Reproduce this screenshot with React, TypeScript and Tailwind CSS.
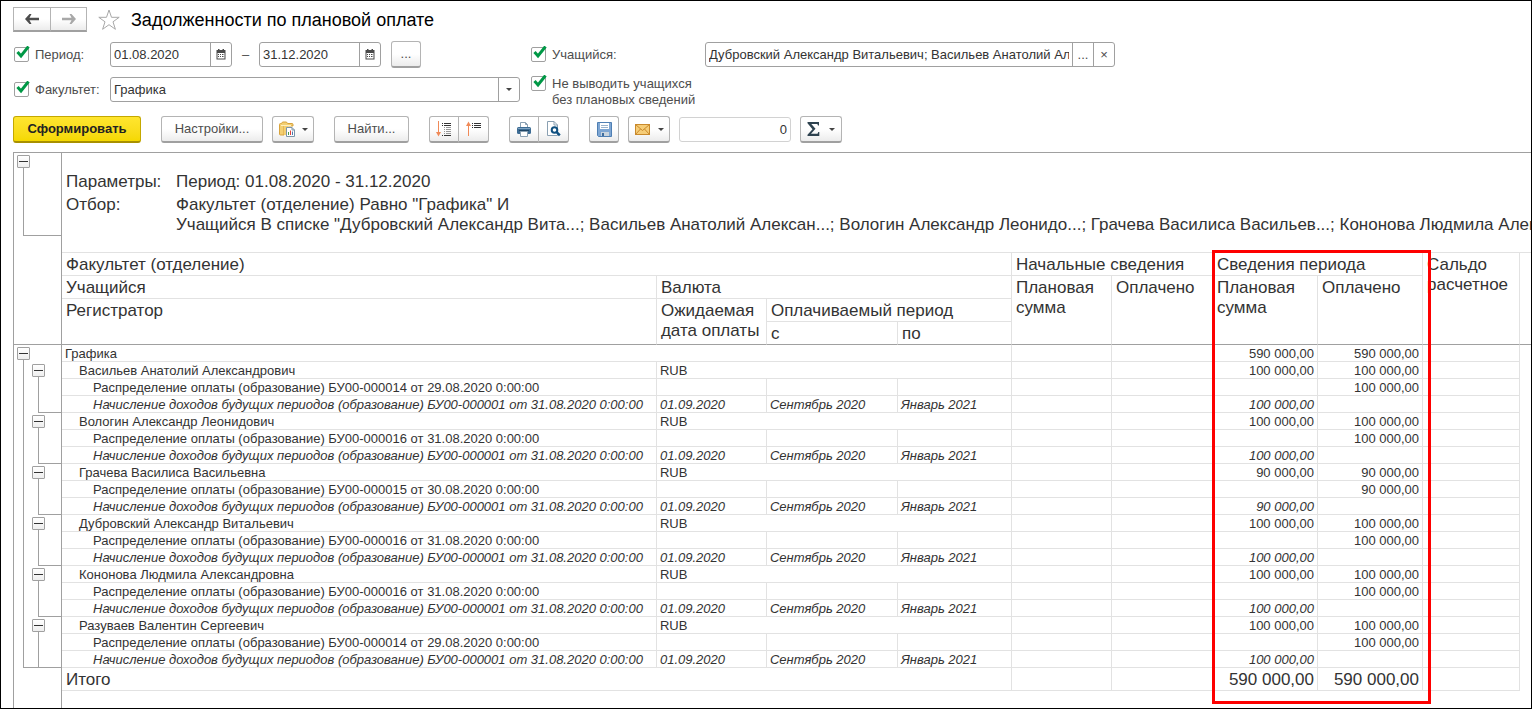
import type { ReactNode } from 'react';

const BUTTON_BASE =
  'flex shrink-0 items-center justify-center border border-b-2 border-[#b4b4b4] border-b-[#a0a0a0] bg-linear-to-b from-white from-50% to-[#ececec] text-[#4d4d4d]';

const BUTTON_STYLE = `${BUTTON_BASE} h-[27px]`;

const FIELD_STYLE =
  'flex h-[25px] rounded-[3px] border border-[#a0a0a0] bg-white text-[#333]';

const INPUT_STYLE = 'min-w-0 flex-1 bg-transparent px-[3px] outline-none';

const FIELD_BUTTON_STYLE =
  'flex w-[21px] shrink-0 items-center justify-center border-l border-[#a0a0a0] text-[#4d4d4d]';

const LINE = 'border-[#a0a0a0]';

const CELL = 'border-r border-b border-[#e2e2e2] pt-px';

const HEAD_BASE =
  'border-r border-b px-1 pt-[2px] text-left align-top text-[17px] leading-5 font-normal whitespace-normal';

const HEAD_CELL = `${HEAD_BASE} border-[#e2e2e2]`;

const HEAD_CELL_LAST = `${HEAD_BASE} border-r-[#e2e2e2] border-b-[#a0a0a0]`;

type Student = {
  name: string;
  payment: string;
  sum: string;
};

const STUDENTS: Student[] = [
  {
    name: 'Васильев Анатолий Александрович',
    payment: 'БУ00-000014 от 29.08.2020 0:00:00',
    sum: '100 000,00',
  },
  {
    name: 'Вологин Александр Леонидович',
    payment: 'БУ00-000016 от 31.08.2020 0:00:00',
    sum: '100 000,00',
  },
  {
    name: 'Грачева Василиса Васильевна',
    payment: 'БУ00-000015 от 30.08.2020 0:00:00',
    sum: '90 000,00',
  },
  {
    name: 'Дубровский Александр Витальевич',
    payment: 'БУ00-000016 от 31.08.2020 0:00:00',
    sum: '100 000,00',
  },
  {
    name: 'Кононова Людмила Александровна',
    payment: 'БУ00-000016 от 31.08.2020 0:00:00',
    sum: '100 000,00',
  },
  {
    name: 'Разуваев Валентин Сергеевич',
    payment: 'БУ00-000014 от 29.08.2020 0:00:00',
    sum: '100 000,00',
  },
];

function ArrowIcon({ flip }: { flip?: boolean }) {
  return (
    <svg
      width="14"
      height="10"
      viewBox="0 0 14 10"
      className={flip ? 'rotate-180' : ''}
    >
      <path
        d="M0 5 L4.5 0 H6.5 L4.5 3.8 H14 V6.2 H4.5 L6.5 10 H4.5 Z"
        fill="currentColor"
      />
    </svg>
  );
}

function CaretIcon() {
  return (
    <svg width="6" height="3" viewBox="0 0 6 3">
      <path d="M0 0 H6 L3 3 Z" fill="#444" />
    </svg>
  );
}

function CalendarIcon() {
  return (
    <svg width="10" height="11" viewBox="0 0 10 11">
      <path d="M2 0h1.5v1h3V0H8v1h1.5v9.5H0.5V1H2Z" fill="#4a4a4a" />
      <path d="M1.5 4h7v5.5h-7Z" fill="#fff" />
      <path
        d="M2 5h1v1H2zM4 5h1v1H4zM6 5h1v1H6zM2 7h1v1H2zM4 7h1v1H4zM6 7h1v1H6zM7.5 5h.6v1h-.6zM7.5 7h.6v1h-.6z"
        fill="#4a4a4a"
      />
    </svg>
  );
}

function StarIcon() {
  return (
    <svg width="22" height="22" viewBox="0 0 22 22">
      <path
        d="M11 1 L13.5 8.3 H21.2 L15 12.8 L17.4 20.3 L11 15.7 L4.6 20.3 L7 12.8 L0.8 8.3 H8.5 Z"
        fill="#fff"
        stroke="#a8a8a8"
      />
    </svg>
  );
}

function FolderIcon() {
  return (
    <svg width="17" height="17" viewBox="0 0 17 17">
      <path
        d="M0.5 3.5 Q0.5 2.5 1.5 2.5 H2.5 L3.5 1 H7.5 L8.5 2.5 H13 Q14 2.5 14 3.5 V5 H5 V14 H1.5 Q0.5 14 0.5 13 Z"
        fill="#f3cf73"
        stroke="#d8a33c"
      />
      <path d="M5 5 H9 V7 H7 V14 H5 Z" fill="#f3cf73" />
      <path d="M2 4.5 H12" stroke="#fff0c0" />
      <path
        d="M7.5 6.5 H13 L15.5 9 V15.5 H7.5 Z"
        fill="#fff"
        stroke="#7b94a9"
      />
      <path d="M13 6.5 V9 H15.5" fill="none" stroke="#7b94a9" />
      <path d="M9.5 11 V14" stroke="#4a9a4a" />
      <path d="M11.5 9.5 V14" stroke="#e0413a" />
      <path d="M13.5 10.5 V14" stroke="#4a78b0" />
    </svg>
  );
}

function ExpandIcon() {
  return (
    <svg width="16" height="16" viewBox="0 0 16 16">
      <path d="M2.5 0 V14" stroke="#f08a58" />
      <path d="M0 11 H5 L2.5 15.5 Z" fill="#f08a58" />
      <path d="M6 2.5h1M8 2.5h7M6 4.5h1M8 4.5h7" stroke="#333" />
      <path
        d="M8 6.5h1M10 6.5h5M8 8.5h1M10 8.5h5M8 10.5h1M10 10.5h5M8 12.5h1M10 12.5h5"
        stroke="#999"
      />
      <path d="M6 14.5h1M8 14.5h7" stroke="#333" />
    </svg>
  );
}

function CollapseIcon() {
  return (
    <svg width="16" height="16" viewBox="0 0 16 16">
      <path d="M2.5 2 V15" stroke="#f08a58" />
      <path d="M0 5 H5 L2.5 0.5 Z" fill="#f08a58" />
      <path
        d="M6 2.5h1M8 2.5h7M6 4.5h1M8 4.5h7M6 6.5h1M8 6.5h7"
        stroke="#333"
      />
    </svg>
  );
}

function PrinterIcon() {
  return (
    <svg width="16" height="15" viewBox="0 0 16 15">
      <path d="M4.5 5 V0.5 H9.5 L11.5 2.5 V5" fill="#fff" stroke="#8aa0b2" />
      <path d="M9.5 0.5 V2.5 H11.5" fill="none" stroke="#8aa0b2" />
      <rect x="1" y="5" width="14" height="7" rx="1.5" fill="#3d6c94" />
      <path d="M2 6.5 H14" stroke="#7fa3c2" />
      <path d="M3 8.5 H13" stroke="#1f4565" />
      <path d="M4.5 9.5 H11.5 V14.5 H4.5 Z" fill="#fff" stroke="#8aa0b2" />
    </svg>
  );
}

function PreviewIcon() {
  return (
    <svg width="15" height="16" viewBox="0 0 15 16">
      <path
        d="M1.5 0.5 H8 L11.5 4 V14.5 H1.5 Z"
        fill="#fff"
        stroke="#8aa0b2"
      />
      <path d="M8 0.5 V4 H11.5" fill="none" stroke="#8aa0b2" />
      <circle
        cx="8.5"
        cy="9"
        r="2.8"
        fill="#fff"
        stroke="#0f5080"
        strokeWidth="2"
      />
      <path d="M10.7 11.2 L13.8 14.4" stroke="#0f5080" strokeWidth="2.4" />
    </svg>
  );
}

function SaveIcon() {
  return (
    <svg width="15" height="15" viewBox="0 0 15 15">
      <path
        d="M0.5 0.5 H14.5 V14.5 H1.5 L0.5 13.5 Z"
        fill="#7ea6d3"
        stroke="#4f7fb3"
      />
      <path d="M3 1 H12 V7 H3 Z" fill="#fff" />
      <path d="M4 3.5h7M4 5.5h7" stroke="#9ab3cc" />
      <path d="M4 10 H12 V14 H4 Z" fill="#c9d4de" />
      <path d="M5 11 H7 V14 H5 Z" fill="#3f6d9e" />
    </svg>
  );
}

function MailIcon() {
  return (
    <svg width="15" height="11" viewBox="0 0 15 11">
      <rect
        x="0.5"
        y="0.5"
        width="14"
        height="10"
        fill="#f6cd78"
        stroke="#c98a2c"
      />
      <path
        d="M0.5 0.5 L7.5 6.5 L14.5 0.5 M0.5 10.5 L5.5 5 M14.5 10.5 L9.5 5"
        fill="none"
        stroke="#c98a2c"
      />
    </svg>
  );
}

function SigmaIcon() {
  return (
    <svg width="13" height="14" viewBox="0 0 13 14">
      <path
        d="M0.5 0 H12 V3.5 H11 L10.3 2 H4.3 L8.5 6.7 L4 11.7 H10.5 L11.3 10 H12.3 V14 H0.5 V12.8 L5.5 7.2 L0.5 1.3 Z"
        fill="#2f4350"
      />
    </svg>
  );
}

function Check({ id, children }: { id: string; children: ReactNode }) {
  return (
    <div className="flex shrink-0 gap-[6px] text-[#4d4d4d]">
      <span className="relative size-[15px]">
        <input
          id={id}
          type="checkbox"
          defaultChecked
          className="peer block size-[15px] appearance-none rounded-[2px] border border-[#a0a0a0] bg-white"
        />
        <svg
          width="15"
          height="15"
          viewBox="0 0 15 15"
          className="pointer-events-none absolute -top-px left-px hidden peer-checked:block"
        >
          <path
            d="M2.5 6 L6 10 L13.5 0.5"
            fill="none"
            stroke="#009846"
            strokeWidth="3"
          />
        </svg>
      </span>
      <label htmlFor={id} className="leading-4">
        {children}
      </label>
    </div>
  );
}

function DateField({ label, value }: { label: string; value: string }) {
  return (
    <div className={`${FIELD_STYLE} w-[122px]`}>
      <input aria-label={label} defaultValue={value} className={INPUT_STYLE} />
      <button aria-label="Календарь" className={FIELD_BUTTON_STYLE}>
        <CalendarIcon />
      </button>
    </div>
  );
}

function Filters() {
  return (
    <div className="flex gap-[11px] pt-[10px] pl-3">
      <div className="flex w-[507px] flex-col gap-[10px]">
        <div className="flex items-center">
          <div className="w-[97px] pl-px">
            <Check id="period">Период:</Check>
          </div>
          <DateField label="Начало периода" value="01.08.2020" />
          <span className="w-[27px] text-center text-[#4d4d4d]">–</span>
          <DateField label="Конец периода" value="31.12.2020" />
          <button
            aria-label="Выбрать период"
            className={`${BUTTON_STYLE} -my-px ml-[10px] w-[30px] rounded-[3px]`}
          >
            ...
          </button>
        </div>
        <div className="flex items-center">
          <div className="w-[97px] pl-px">
            <Check id="faculty">Факультет:</Check>
          </div>
          <div className={`${FIELD_STYLE} flex-1`}>
            <select
              aria-label="Значение факультета"
              className={`${INPUT_STYLE} appearance-none`}
            >
              <option>Графика</option>
            </select>
            <span className={`${FIELD_BUTTON_STYLE} pointer-events-none`}>
              <CaretIcon />
            </span>
          </div>
        </div>
      </div>
      <div className="flex flex-col gap-[9px]">
        <div className="flex items-center">
          <div className="w-[174px]">
            <Check id="students">Учащийся:</Check>
          </div>
          <div className={`${FIELD_STYLE} w-[410px]`}>
            <input
              aria-label="Список учащихся"
              defaultValue="Дубровский Александр Витальевич; Васильев Анатолий Александрович"
              className={INPUT_STYLE}
            />
            <button aria-label="Выбрать" className={FIELD_BUTTON_STYLE}>
              ...
            </button>
            <button aria-label="Очистить" className={FIELD_BUTTON_STYLE}>
              ×
            </button>
          </div>
        </div>
        <Check id="planned">
          Не выводить учащихся
          <br />
          без плановых сведений
        </Check>
      </div>
    </div>
  );
}

function Toolbar() {
  return (
    <div className="flex gap-5 pt-2 pb-[9px] pl-3">
      <button className="h-[27px] w-32 shrink-0 rounded-[3px] border border-b-2 border-[#c4a800] border-b-[#a89000] bg-linear-to-b from-[#ffe52e] to-[#f5d800] font-bold text-[#222]">
        Сформировать
      </button>
      <div className="flex gap-[9px]">
        <button className={`${BUTTON_STYLE} w-[102px] rounded-[3px]`}>
          Настройки...
        </button>
        <button
          aria-label="Варианты отчета"
          className={`${BUTTON_STYLE} w-[42px] gap-[6px] rounded-[3px]`}
        >
          <FolderIcon />
          <CaretIcon />
        </button>
      </div>
      <button className={`${BUTTON_STYLE} w-[75px] rounded-[3px]`}>
        Найти...
      </button>
      <div className="flex">
        <button
          aria-label="Развернуть группы"
          className={`${BUTTON_STYLE} w-[30px] rounded-l-[3px]`}
        >
          <ExpandIcon />
        </button>
        <button
          aria-label="Свернуть группы"
          className={`${BUTTON_STYLE} -ml-px w-[31px] rounded-r-[3px]`}
        >
          <CollapseIcon />
        </button>
      </div>
      <div className="flex">
        <button
          aria-label="Печать"
          className={`${BUTTON_STYLE} w-[30px] rounded-l-[3px]`}
        >
          <PrinterIcon />
        </button>
        <button
          aria-label="Предварительный просмотр"
          className={`${BUTTON_STYLE} -ml-px w-[31px] rounded-r-[3px]`}
        >
          <PreviewIcon />
        </button>
      </div>
      <div className="flex gap-[9px]">
        <button
          aria-label="Сохранить"
          className={`${BUTTON_STYLE} w-[30px] rounded-[3px]`}
        >
          <SaveIcon />
        </button>
        <button
          aria-label="Отправить"
          className={`${BUTTON_STYLE} w-[42px] gap-2 rounded-[3px]`}
        >
          <MailIcon />
          <CaretIcon />
        </button>
        <input
          aria-label="Сумма"
          readOnly
          value="0"
          className="h-[25px] w-28 self-center rounded-[3px] border border-[#d2d2d2] px-[3px] text-right text-[#333] outline-none"
        />
        <button
          aria-label="Функция"
          className={`${BUTTON_STYLE} w-[42px] gap-[9px] rounded-[3px]`}
        >
          <SigmaIcon />
          <CaretIcon />
        </button>
      </div>
    </div>
  );
}

function Toggle() {
  return (
    <button
      aria-label="Свернуть"
      className="flex size-[13px] shrink-0 items-center justify-center rounded-[1px] border border-[#a0a0a0] bg-linear-to-b from-white to-[#eee]"
    >
      <span className="h-px w-[9px] bg-[#333]" />
    </button>
  );
}

// Group brackets to the left of the sheet
function Gutter() {
  return (
    <div className={`w-[49px] shrink-0 border-x ${LINE}`}>
      <div className={`h-48 border-b pt-[2px] pl-[3px] ${LINE}`}>
        <Toggle />
        <div className={`ml-[6px] h-[68px] border-b border-l ${LINE}`} />
      </div>
      <div className="pt-[2px] pl-[3px]">
        <Toggle />
        <div className={`ml-[6px] border-b border-l pt-[2px] pl-2 ${LINE}`}>
          {STUDENTS.map((student) => (
            <div
              key={student.name}
              className="group flex h-[51px] flex-col pt-[2px] last:h-[50px]"
            >
              <Toggle />
              <div
                className={`ml-[6px] flex-1 border-b border-l group-last:border-b-0 ${LINE}`}
              />
            </div>
          ))}
        </div>
      </div>
    </div>
  );
}

function Parameters() {
  return (
    <dl className="grid grid-cols-[110px_1fr] gap-y-[3px] pt-[19px] pb-[17px] pl-1 text-[17px] leading-5 whitespace-nowrap">
      <dt>Параметры:</dt>
      <dd>Период: 01.08.2020 - 31.12.2020</dd>
      <dt>Отбор:</dt>
      <dd>
        Факультет (отделение) Равно "Графика" И
        <br />
        Учащийся В списке "Дубровский Александр Вита...; Васильев Анатолий
        Алексан...; Вологин Александр Леонидо...; Грачева Василиса Васильев...;
        Кононова Людмила Александ...
      </dd>
    </dl>
  );
}

function SheetHead() {
  return (
    <thead>
      <tr className="h-[23px]">
        <th colSpan={4} className={HEAD_CELL}>
          Факультет (отделение)
        </th>
        <th colSpan={2} className={HEAD_CELL}>
          Начальные сведения
        </th>
        <th colSpan={2} className={HEAD_CELL}>
          Сведения периода
        </th>
        <th rowSpan={4} className={HEAD_CELL_LAST}>
          Сальдо расчетное
        </th>
        <td rowSpan={4} className={`border-b ${LINE}`} />
      </tr>
      <tr className="h-[23px]">
        <th className={HEAD_CELL}>Учащийся</th>
        <th colSpan={3} className={HEAD_CELL}>
          Валюта
        </th>
        <th rowSpan={3} className={HEAD_CELL_LAST}>
          Плановая сумма
        </th>
        <th rowSpan={3} className={HEAD_CELL_LAST}>
          Оплачено
        </th>
        <th rowSpan={3} className={HEAD_CELL_LAST}>
          Плановая сумма
        </th>
        <th rowSpan={3} className={HEAD_CELL_LAST}>
          Оплачено
        </th>
      </tr>
      <tr className="h-[23px]">
        <th rowSpan={2} className={HEAD_CELL_LAST}>
          Регистратор
        </th>
        <th rowSpan={2} className={HEAD_CELL_LAST}>
          Ожидаемая дата оплаты
        </th>
        <th colSpan={2} className={HEAD_CELL}>
          Оплачиваемый период
        </th>
      </tr>
      <tr className="h-[23px]">
        <th className={HEAD_CELL_LAST}>с</th>
        <th className={HEAD_CELL_LAST}>по</th>
      </tr>
    </thead>
  );
}

function SumCells({ planned, paid }: { planned?: string; paid?: string }) {
  return (
    <>
      <td className={CELL} />
      <td className={CELL} />
      <td className={`${CELL} pr-[3px] text-right`}>{planned}</td>
      <td className={`${CELL} pr-[3px] text-right`}>{paid}</td>
      <td className={CELL} />
    </>
  );
}

function StudentRows({ student }: { student: Student }) {
  return (
    <>
      <tr>
        <td className={`${CELL} pl-[17px]`}>{student.name}</td>
        <td colSpan={3} className={`${CELL} pl-[3px]`}>
          RUB
        </td>
        <SumCells planned={student.sum} paid={student.sum} />
      </tr>
      <tr>
        <td className={`${CELL} pl-[31px]`}>
          Распределение оплаты (образование) {student.payment}
        </td>
        <td className={CELL} />
        <td className={CELL} />
        <td className={CELL} />
        <SumCells paid={student.sum} />
      </tr>
      <tr className="italic">
        <td className={`${CELL} pl-[31px]`}>
          Начисление доходов будущих периодов (образование) БУ00-000001 от
          31.08.2020 0:00:00
        </td>
        <td className={`${CELL} pl-[3px]`}>01.09.2020</td>
        <td className={`${CELL} pl-[3px]`}>Сентябрь 2020</td>
        <td className={`${CELL} pl-[3px]`}>Январь 2021</td>
        <SumCells planned={student.sum} />
      </tr>
    </>
  );
}

function Sheet() {
  return (
    <div className="relative">
      <table className="w-full table-fixed border-separate border-spacing-0 leading-[15px] whitespace-nowrap">
        <colgroup>
          <col />
          <col className="w-[110px]" />
          <col className="w-[131px]" />
          <col className="w-[114px]" />
          <col className="w-[100px]" />
          <col className="w-[101px]" />
          <col className="w-[105px]" />
          <col className="w-[105px]" />
          <col className="w-[97px]" />
          <col className="w-[11px]" />
        </colgroup>
        <SheetHead />
        <tbody>
          <tr>
            <td colSpan={4} className={`${CELL} pl-[3px]`}>
              Графика
            </td>
            <SumCells planned="590 000,00" paid="590 000,00" />
          </tr>
          {STUDENTS.map((student) => (
            <StudentRows key={student.name} student={student} />
          ))}
        </tbody>
        <tfoot>
          <tr className="h-[23px] text-[17px] leading-5">
            <td colSpan={4} className={`${CELL} pl-1`}>
              Итого
            </td>
            <SumCells planned="590 000,00" paid="590 000,00" />
          </tr>
        </tfoot>
      </table>
      {/* marks the columns of the current period */}
      <div className="pointer-events-none absolute -top-[3px] right-[100px] -bottom-[13px] w-[219px] border-3 border-[#fe0000]" />
    </div>
  );
}

function App() {
  return (
    <main className="flex min-h-screen flex-col overflow-hidden border border-black bg-white font-['Liberation_Sans',Arial,sans-serif] text-[13px] text-[#333]">
      <header className="flex items-center pt-[6px] pl-3">
        <div className="flex">
          <button
            aria-label="Назад"
            className={`${BUTTON_BASE} h-[25px] w-[38px]`}
          >
            <ArrowIcon />
          </button>
          <button
            aria-label="Вперед"
            className={`${BUTTON_BASE} -ml-px h-[25px] w-[37px]`}
          >
            <span className="text-[#a8a8a8]">
              <ArrowIcon flip />
            </span>
          </button>
        </div>
        <button aria-label="В избранное" className="mx-[11px]">
          <StarIcon />
        </button>
        <h1 className="text-lg leading-6 text-black">
          Задолженности по плановой оплате
        </h1>
      </header>
      <Filters />
      <Toolbar />
      <section className={`ml-3 flex flex-1 border-t ${LINE}`}>
        <Gutter />
        <div className="min-w-0 flex-1">
          <div className="overflow-hidden border-b border-[#e2e2e2]">
            <Parameters />
          </div>
          <Sheet />
        </div>
      </section>
    </main>
  );
}

export default App;
